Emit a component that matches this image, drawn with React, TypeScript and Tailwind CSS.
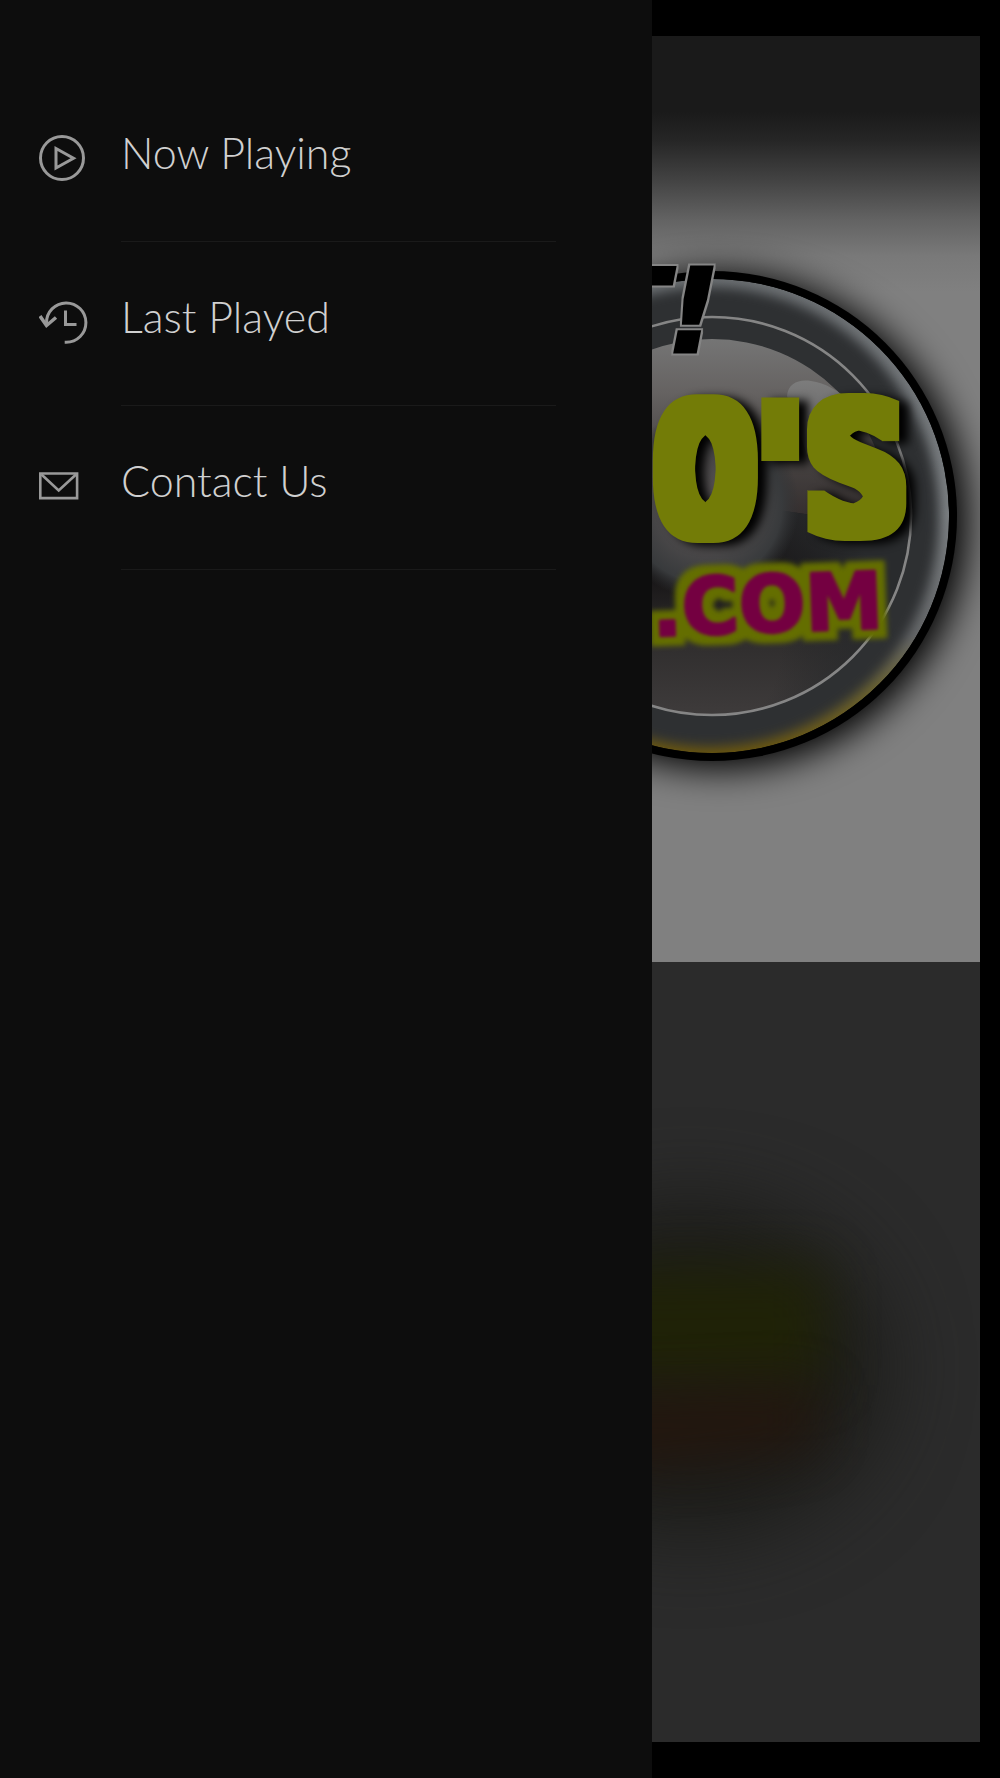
import React from "react";

interface MenuItem {
  label: string;
  href: string;
  icon: React.ReactNode;
}

const PlayIcon: React.FC = () => (
  <svg width="46" height="46" viewBox="0 0 46 46" fill="none" stroke="#999999" strokeWidth="3" aria-hidden="true">
    <circle cx="23" cy="23" r="21.5" />
    <path d="M17 13.5v19.5l17.5-9.8z" />
  </svg>
);

const HistoryIcon: React.FC = () => (
  <svg width="49" height="43" viewBox="0 0 49 43" fill="none" stroke="#999999" strokeWidth="3" aria-hidden="true">
    <path d="M7.5 22a19.7 19.7 0 1 1 19.7 19.3h-1.5" />
    <path d="M1 15l6.5 9.5L17 16.5" strokeWidth="3.5" />
    <path d="M26.5 9.5v14h11" />
  </svg>
);

const MailIcon: React.FC = () => (
  <svg width="40" height="28" viewBox="0 0 40 28" fill="none" stroke="#999999" strokeWidth="2.6" aria-hidden="true">
    <path d="M1.3 1.5h36.8v24.6H1.3z" />
    <path d="M2.5 2.5L19.7 18.5 37 2.5" />
  </svg>
);

const menuItems: MenuItem[] = [
  { label: "Now Playing", href: "#now-playing", icon: <PlayIcon /> },
  { label: "Last Played", href: "#last-played", icon: <HistoryIcon /> },
  { label: "Contact Us", href: "#contact", icon: <MailIcon /> },
];

const Artwork: React.FC = () => (
  <svg className="block w-full" viewBox="652 36 328 926" role="img" aria-label="Station logo">
    <defs>
      <linearGradient id="sky" gradientUnits="userSpaceOnUse" x1="0" y1="112" x2="0" y2="292">
        <stop offset="0" stopColor="#1a1a1a" />
        <stop offset="0.16" stopColor="#262626" />
        <stop offset="0.38" stopColor="#434343" />
        <stop offset="0.6" stopColor="#636363" />
        <stop offset="0.8" stopColor="#797979" />
        <stop offset="1" stopColor="#808080" />
      </linearGradient>
      <linearGradient id="rim" gradientUnits="userSpaceOnUse" x1="0" y1="278" x2="0" y2="754">
        <stop offset="0" stopColor="#6c7073" />
        <stop offset="0.5" stopColor="#7c8083" />
        <stop offset="0.75" stopColor="#66686a" />
        <stop offset="0.86" stopColor="#6b6332" />
        <stop offset="1" stopColor="#6b560c" />
      </linearGradient>
      <linearGradient id="lensTop" gradientUnits="userSpaceOnUse" x1="0" y1="339" x2="0" y2="520">
        <stop offset="0" stopColor="#757575" />
        <stop offset="0.3" stopColor="#656261" />
        <stop offset="0.65" stopColor="#484443" />
        <stop offset="1" stopColor="#332d2d" />
      </linearGradient>
      <linearGradient id="lensBottom" gradientUnits="userSpaceOnUse" x1="0" y1="500" x2="0" y2="714">
        <stop offset="0" stopColor="#1d191a" />
        <stop offset="0.35" stopColor="#171516" />
        <stop offset="0.65" stopColor="#2f2d2d" />
        <stop offset="1" stopColor="#3e3b3b" />
      </linearGradient>
      <radialGradient id="lensEdge" gradientUnits="userSpaceOnUse" cx="690" cy="650" r="200">
        <stop offset="0.45" stopColor="#232527" stopOpacity="0" />
        <stop offset="1" stopColor="#292b2d" />
      </radialGradient>
      <radialGradient id="iris" gradientUnits="userSpaceOnUse" cx="705" cy="505" r="94">
        <stop offset="0" stopColor="#5b5758" />
        <stop offset="0.5" stopColor="#4a4849" />
        <stop offset="0.82" stopColor="#383a3c" />
        <stop offset="1" stopColor="#303234" stopOpacity="0" />
      </radialGradient>
      <linearGradient id="glare" x1="0" y1="0" x2="0" y2="1">
        <stop offset="0" stopColor="#7c7c7c" />
        <stop offset="0.5" stopColor="#686666" />
        <stop offset="1" stopColor="#5a5555" stopOpacity="0" />
      </linearGradient>
      <filter id="blurShadow" x="-30%" y="-30%" width="160%" height="160%" colorInterpolationFilters="sRGB">
        <feGaussianBlur stdDeviation="18" />
      </filter>
      <filter id="blurRim" x="-30%" y="-30%" width="160%" height="160%" colorInterpolationFilters="sRGB">
        <feGaussianBlur stdDeviation="6" />
      </filter>
      <filter id="outline" x="-20%" y="-20%" width="140%" height="140%" colorInterpolationFilters="sRGB">
        <feMorphology in="SourceAlpha" operator="dilate" radius="2" result="fat" />
        <feFlood floodColor="#858585" />
        <feComposite in2="fat" operator="in" />
        <feMerge>
          <feMergeNode />
          <feMergeNode in="SourceGraphic" />
        </feMerge>
        <feGaussianBlur stdDeviation="0.6" />
      </filter>
      <filter id="halo" x="-20%" y="-40%" width="140%" height="180%" colorInterpolationFilters="sRGB">
        <feMorphology in="SourceAlpha" operator="dilate" radius="9" result="fat" />
        <feGaussianBlur in="fat" stdDeviation="2.5" result="fatSoft" />
        <feFlood floodColor="#646e00" />
        <feComposite in2="fatSoft" operator="in" result="yellow" />
        <feGaussianBlur in="SourceGraphic" stdDeviation="1.4" result="face" />
        <feMerge>
          <feMergeNode in="yellow" />
          <feMergeNode in="face" />
        </feMerge>
      </filter>
      {/* dilating squares off the round glyphs before the shadow is added */}
      <filter id="block" x="-30%" y="-30%" width="160%" height="160%" colorInterpolationFilters="sRGB">
        <feMorphology operator="dilate" radius="8" result="fat" />
        <feDropShadow in="fat" dx="9" dy="3" stdDeviation="5" floodColor="#000000" floodOpacity="1" />
      </filter>
      <clipPath id="disc">
        <circle cx="712" cy="516" r="237" />
      </clipPath>
      <clipPath id="lensShape">
        <circle cx="712" cy="516" r="177" />
        <path d="M514 540h396a199 199 0 0 1-198 175 199 199 0 0 1-198-175z" />
      </clipPath>
    </defs>

    <rect x="652" y="36" width="328" height="926" fill="url(#sky)" />

    {/* badge */}
    <circle cx="719" cy="521" r="248" fill="#000000" filter="url(#blurShadow)" />
    <circle cx="712" cy="516" r="245" fill="#000000" />
    <g clipPath="url(#disc)">
      <circle cx="712" cy="516" r="237" fill="url(#rim)" />
      <circle cx="709" cy="517" r="230" fill="#2e3032" filter="url(#blurRim)" />
      <g clipPath="url(#lensShape)">
        <path d="M512 316h400v400H512z" fill="url(#lensTop)" />
        <path d="M512 470l400 60v190H512z" fill="url(#lensBottom)" />
        <path d="M512 470l400 60v190H512z" fill="url(#lensEdge)" />
      </g>
      <circle cx="705" cy="505" r="94" fill="url(#iris)" />
      <path d="M787 396c1-13 12-17 24-15 14 2 28 9 42 24l-10 80-36-30z" fill="url(#glare)" />
      <circle cx="712" cy="516" r="199" fill="none" stroke="#858585" strokeWidth="2.6" />
    </g>

    {/* lettering */}
    <text
      x="588"
      y="352"
      fontFamily="'DejaVu Sans', sans-serif"
      fontWeight="bold"
      fontStyle="italic"
      fontSize="116"
      fill="#000000"
      stroke="#000000"
      strokeWidth="3"
      filter="url(#outline)"
    >
      T!
    </text>
    <g
      fontFamily="'DejaVu Sans Mono', monospace"
      fontWeight="bold"
      fontSize="174"
      fill="#737c07"
      filter="url(#block)"
    >
      <text x="653" y="533">O</text>
      <text x="728" y="533">'</text>
      <text x="804" y="531">S</text>
    </g>
    <text
      x="653"
      y="636"
      transform="rotate(-2 654 636)"
      fontFamily="'DejaVu Sans', sans-serif"
      fontWeight="bold"
      fontSize="78"
      fill="#740041"
      stroke="#740041"
      strokeWidth="3"
      strokeLinejoin="round"
      filter="url(#halo)"
    >
      .COM
    </text>
  </svg>
);

const Reflection: React.FC = () => (
  <svg className="block w-full flex-1" viewBox="652 962 328 780" preserveAspectRatio="xMinYMin slice" aria-hidden="true">
    <defs>
      <filter id="haze" filterUnits="userSpaceOnUse" x="300" y="962" width="900" height="780" colorInterpolationFilters="sRGB">
        <feGaussianBlur stdDeviation="40" />
      </filter>
      <filter id="haze2" filterUnits="userSpaceOnUse" x="300" y="962" width="900" height="780" colorInterpolationFilters="sRGB">
        <feGaussianBlur stdDeviation="26" />
      </filter>
    </defs>
    <rect x="652" y="962" width="328" height="780" fill="#2b2b2b" />
    <ellipse cx="690" cy="1368" rx="195" ry="168" fill="#1c1c19" filter="url(#haze)" />
    <path d="M540 1270l285-5v120H540z" fill="#212500" opacity="0.7" filter="url(#haze2)" />
    <path d="M540 1400l275-15v62l-275 28z" fill="#25150b" opacity="0.8" filter="url(#haze2)" />
  </svg>
);

const App: React.FC = () => {
  return (
    <div className="flex min-h-screen bg-black">
      <aside className="w-[65.2%] shrink-0 bg-[#0d0d0d] pt-[78px]">
        <nav aria-label="Main menu">
          <ul>
            {menuItems.map((item) => (
              <li key={item.label}>
                <a href={item.href} className="flex h-[164px] items-stretch pl-[39px] pr-24 text-[#d0d0d0]">
                  <span className="flex w-[82px] shrink-0 items-center pb-1">{item.icon}</span>
                  <span className="flex flex-1 items-center border-b border-[#1a1a1a] pb-[14px] font-['Lato',sans-serif] text-[43px] font-light leading-none">
                    {item.label}
                  </span>
                </a>
              </li>
            ))}
          </ul>
        </nav>
      </aside>

      <main className="flex flex-1 flex-col pt-9 pr-5 pb-9">
        <Artwork />
        <Reflection />
      </main>
    </div>
  );
};

export default App;
